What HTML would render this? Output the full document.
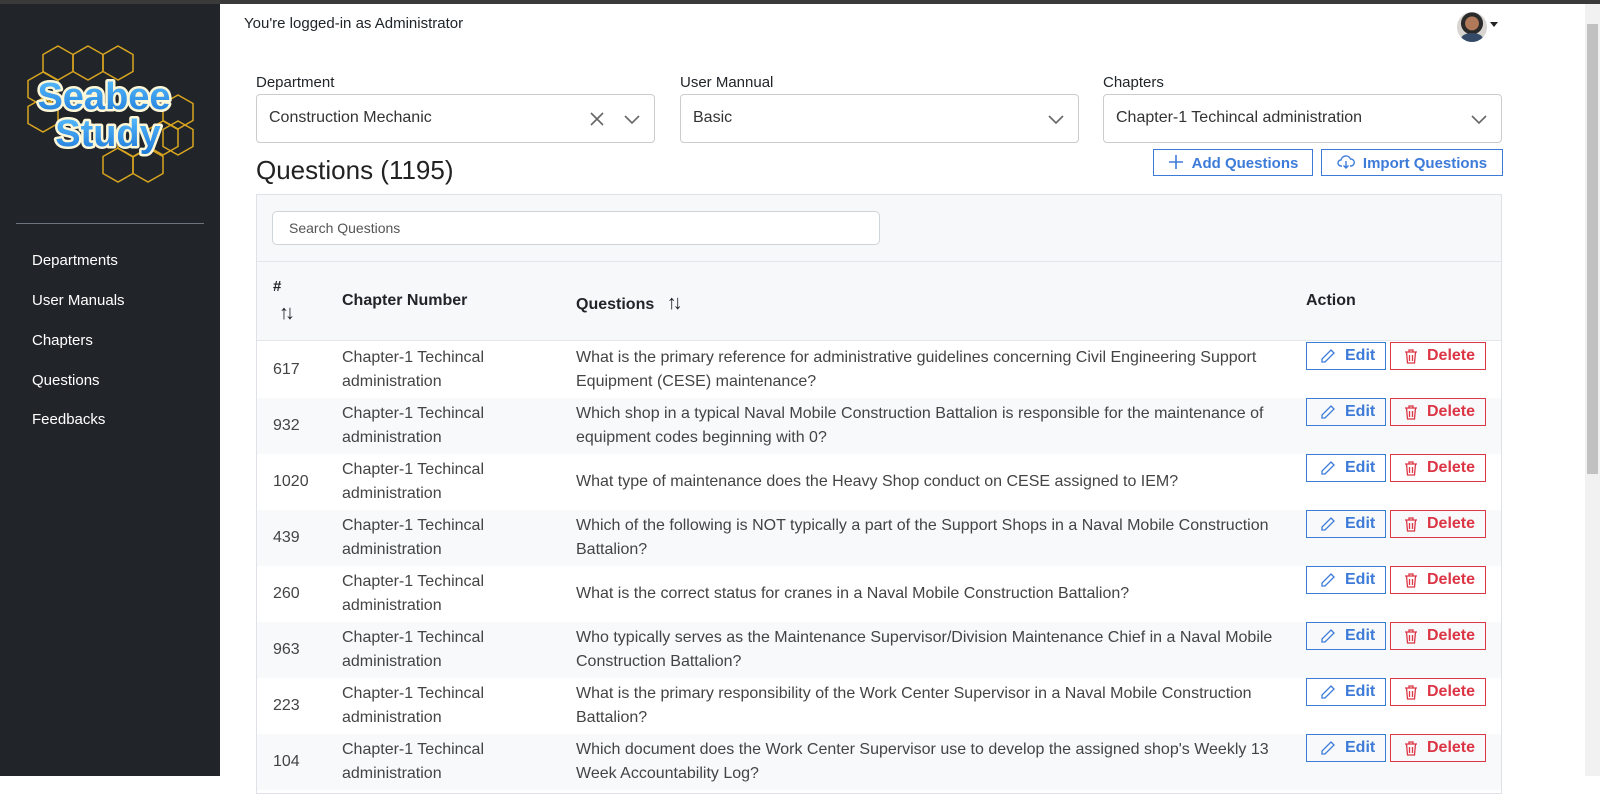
<!DOCTYPE html>
<html><head><meta charset="utf-8">
<style>
*{box-sizing:border-box;margin:0;padding:0}
body{width:1600px;height:776px;overflow:hidden;font-family:"Liberation Sans",sans-serif;background:#fff;position:relative;color:#212529}
.top{position:absolute;left:0;top:0;width:1600px;height:4px;background:#3a3a3a}
.side{position:absolute;left:0;top:4px;width:220px;height:772px;background:#212529}
.side hr{position:absolute;left:16px;top:219px;width:188px;border:0;border-top:1px solid #6c757d}
.nav{position:absolute;left:32px;color:#fff;font-size:15px}
.scroll{position:absolute;left:1585px;top:4px;width:15px;height:772px;background:#f1f1f1}
.scroll div{position:absolute;left:2px;top:20px;width:11px;height:450px;background:#c1c1c1}
.abs{position:absolute}
.lbl{position:absolute;top:74px;font-size:15px;color:#212529}
.sel{position:absolute;top:94px;height:49px;border:1px solid #ccc;border-radius:4px;font-size:16px;color:#333;padding:14px 12px}
.chev{position:absolute;right:14px;top:16px}
.btn{position:absolute;top:149px;height:27px;border:1px solid #3d7bd9;color:#3d7bd9;font-weight:bold;font-size:15px;padding:4px 0 0 0;text-align:center}
.card{position:absolute;left:256px;top:194px;width:1246px;height:600px;border:1px solid #dee2e6;background:#fff}
.search{position:absolute;left:272px;top:211px;width:608px;height:34px;border:1px solid #ced4da;border-radius:5px;font-size:14px;color:#555;padding:8px 16px;background:#fff}
.row{position:absolute;left:257px;width:1244px;height:56px;font-size:16px;color:#444;line-height:24px}
.row .c{position:absolute}
.e{position:absolute;left:1049px;top:0px;width:80px;height:28px;border:1px solid #3d7bd9;color:#3d7bd9;font-weight:bold;font-size:16px;line-height:26px;padding-left:38px}
.d{position:absolute;left:1133px;top:0px;width:96px;height:28px;border:1px solid #dc3545;color:#dc3545;font-weight:bold;font-size:16px;line-height:26px;padding-left:36px}
.e svg,.d svg{position:absolute;left:13px;top:5px}
</style></head><body>
<div class="top"></div>
<div class="side"></div>
<svg class="abs" style="left:0;top:0" width="220" height="200" viewBox="0 0 220 200">
<defs><polygon id="h" points="0,-17 15,-8.5 15,8.5 0,17 -15,8.5 -15,-8.5"/>
<linearGradient id="g" x1="0" y1="0" x2="0" y2="1"><stop offset="0" stop-color="#5cc0ff"/><stop offset="1" stop-color="#1c78d8"/></linearGradient></defs>
<g fill="none" stroke="#d9a520" stroke-width="1.5">
<use href="#h" x="58" y="63"/><use href="#h" x="88" y="63"/><use href="#h" x="118" y="63"/>
<use href="#h" x="43" y="89"/><use href="#h" x="43" y="115"/>
<use href="#h" x="178" y="112"/><use href="#h" x="163" y="138"/><use href="#h" x="178" y="138"/>
<use href="#h" x="118" y="165"/><use href="#h" x="148" y="165"/><use href="#h" x="133" y="140"/>
</g>
<text x="104" y="109" text-anchor="middle" font-family="Liberation Sans" font-weight="bold" font-size="38" fill="url(#g)" stroke="#fff8d8" stroke-width="5" stroke-linejoin="round" paint-order="stroke">Seabee</text>
<text x="108" y="146" text-anchor="middle" font-family="Liberation Sans" font-weight="bold" font-size="38" fill="url(#g)" stroke="#fff8d8" stroke-width="5" stroke-linejoin="round" paint-order="stroke">Study</text>
</svg>
<div class="side" style="background:none"><hr>
<div class="nav" style="top:248px">Departments</div>
<div class="nav" style="top:288px">User Manuals</div>
<div class="nav" style="top:328px">Chapters</div>
<div class="nav" style="top:368px">Questions</div>
<div class="nav" style="top:407px">Feedbacks</div>
</div>
<div class="scroll"><div></div></div>
<div class="abs" style="left:244px;top:15px;font-size:15px">You're logged-in as Administrator</div>
<div class="abs" style="left:1457px;top:12px;width:30px;height:30px;border-radius:50%;background:radial-gradient(circle at 50% 38%,#b07a5a 0 28%,#2a2a2a 30% 45%,#d8d4d0 47%);overflow:hidden"><div style="position:absolute;left:4px;top:21px;width:22px;height:12px;border-radius:50%;background:#344a66"></div></div>
<div class="abs" style="left:1490px;top:22px;border-left:4px solid transparent;border-right:4px solid transparent;border-top:5px solid #222"></div>

<div class="lbl" style="left:256px">Department</div>
<div class="lbl" style="left:680px">User Mannual</div>
<div class="lbl" style="left:1103px">Chapters</div>
<div class="sel" style="left:256px;width:399px">Construction Mechanic
<svg class="abs" style="right:50px;top:17px" width="14" height="14"><path d="M1 1L13 13M13 1L1 13" stroke="#666" stroke-width="1.6"/></svg>
<svg class="chev" width="16" height="16"><path d="M1 5l7 7 7-7" fill="none" stroke="#666" stroke-width="1.6"/></svg></div>
<div class="sel" style="left:680px;width:399px">Basic<svg class="chev" width="16" height="16"><path d="M1 5l7 7 7-7" fill="none" stroke="#666" stroke-width="1.6"/></svg></div>
<div class="sel" style="left:1103px;width:399px">Chapter-1 Techincal administration<svg class="chev" width="16" height="16"><path d="M1 5l7 7 7-7" fill="none" stroke="#666" stroke-width="1.6"/></svg></div>

<div class="abs" style="left:256px;top:155px;font-size:26px;color:#222">Questions (1195)</div>
<div class="btn" style="left:1153px;width:160px"><svg style="vertical-align:-2px;margin-right:8px" width="16" height="16"><path d="M8 1v14M1 8h14" stroke="#3d7bd9" stroke-width="1.6"/></svg>Add Questions</div>
<div class="btn" style="left:1321px;width:182px"><svg style="vertical-align:-2px;margin-right:8px" width="18" height="16"><path d="M5 12H4a3 3 0 0 1 0-6 5 5 0 0 1 9.5-1A3.5 3.5 0 0 1 14 12h-1M9 7v7M6.5 11.5L9 14l2.5-2.5" fill="none" stroke="#3d7bd9" stroke-width="1.4"/></svg>Import Questions</div>

<div class="card"></div>
<div class="abs" style="left:257px;top:195px;width:1244px;height:146px;background:#f7f8fa;border-bottom:1px solid #e3e6ea"></div>
<div class="abs" style="left:257px;top:261px;width:1244px;height:1px;background:#e3e6ea"></div>
<div class="search">Search Questions</div>
<div class="abs" style="left:273px;top:278px;font-weight:bold;font-size:15px">#</div>
<div class="abs" style="left:279px;top:302px;font-size:20px;letter-spacing:-4px">↑↓</div>
<div class="abs" style="left:342px;top:292px;font-weight:bold;font-size:16px">Chapter Number</div>
<div class="abs" style="left:576px;top:292px;font-weight:bold;font-size:16px">Questions <span style="font-size:20px;letter-spacing:-4px;margin-left:8px">↑↓</span></div>
<div class="abs" style="left:1306px;top:292px;font-weight:bold;font-size:16px">Action</div>

<div id="rows"></div>
<script>
var d=[["617","What is the primary reference for administrative guidelines concerning Civil Engineering Support<br>Equipment (CESE) maintenance?"],
["932","Which shop in a typical Naval Mobile Construction Battalion is responsible for the maintenance of<br>equipment codes beginning with 0?"],
["1020","What type of maintenance does the Heavy Shop conduct on CESE assigned to IEM?"],
["439","Which of the following is NOT typically a part of the Support Shops in a Naval Mobile Construction<br>Battalion?"],
["260","What is the correct status for cranes in a Naval Mobile Construction Battalion?"],
["963","Who typically serves as the Maintenance Supervisor/Division Maintenance Chief in a Naval Mobile<br>Construction Battalion?"],
["223","What is the primary responsibility of the Work Center Supervisor in a Naval Mobile Construction<br>Battalion?"],
["104","Which document does the Work Center Supervisor use to develop the assigned shop's Weekly 13<br>Week Accountability Log?"]];
var h="";
d.forEach(function(r,i){var t=342+i*56;var two=r[1].indexOf("<br>")>0;
h+='<div class="row" style="top:'+t+'px;background:'+(i%2?'#f8f9fa':'#fff')+'"><div class="c" style="left:16px;top:16px">'+r[0]+'</div><div class="c" style="left:85px;top:4px">Chapter-1 Techincal<br>administration</div><div class="c" style="left:319px;top:'+(two?4:16)+'px">'+r[1]+'</div>'+
'<div class="e"><svg width="16" height="16"><path d="M11 2l3 3-9 9H2v-3z" fill="none" stroke="#3d7bd9" stroke-width="1.3"/></svg>Edit</div>'+
'<div class="d"><svg width="14" height="16"><path d="M1 4h12M5 4V2h4v2M2.5 4l1 11h7l1-11M5.5 7v6M8.5 7v6" fill="none" stroke="#dc3545" stroke-width="1.3"/></svg>Delete</div></div>';});
document.getElementById("rows").innerHTML=h;
</script>
</body></html>
